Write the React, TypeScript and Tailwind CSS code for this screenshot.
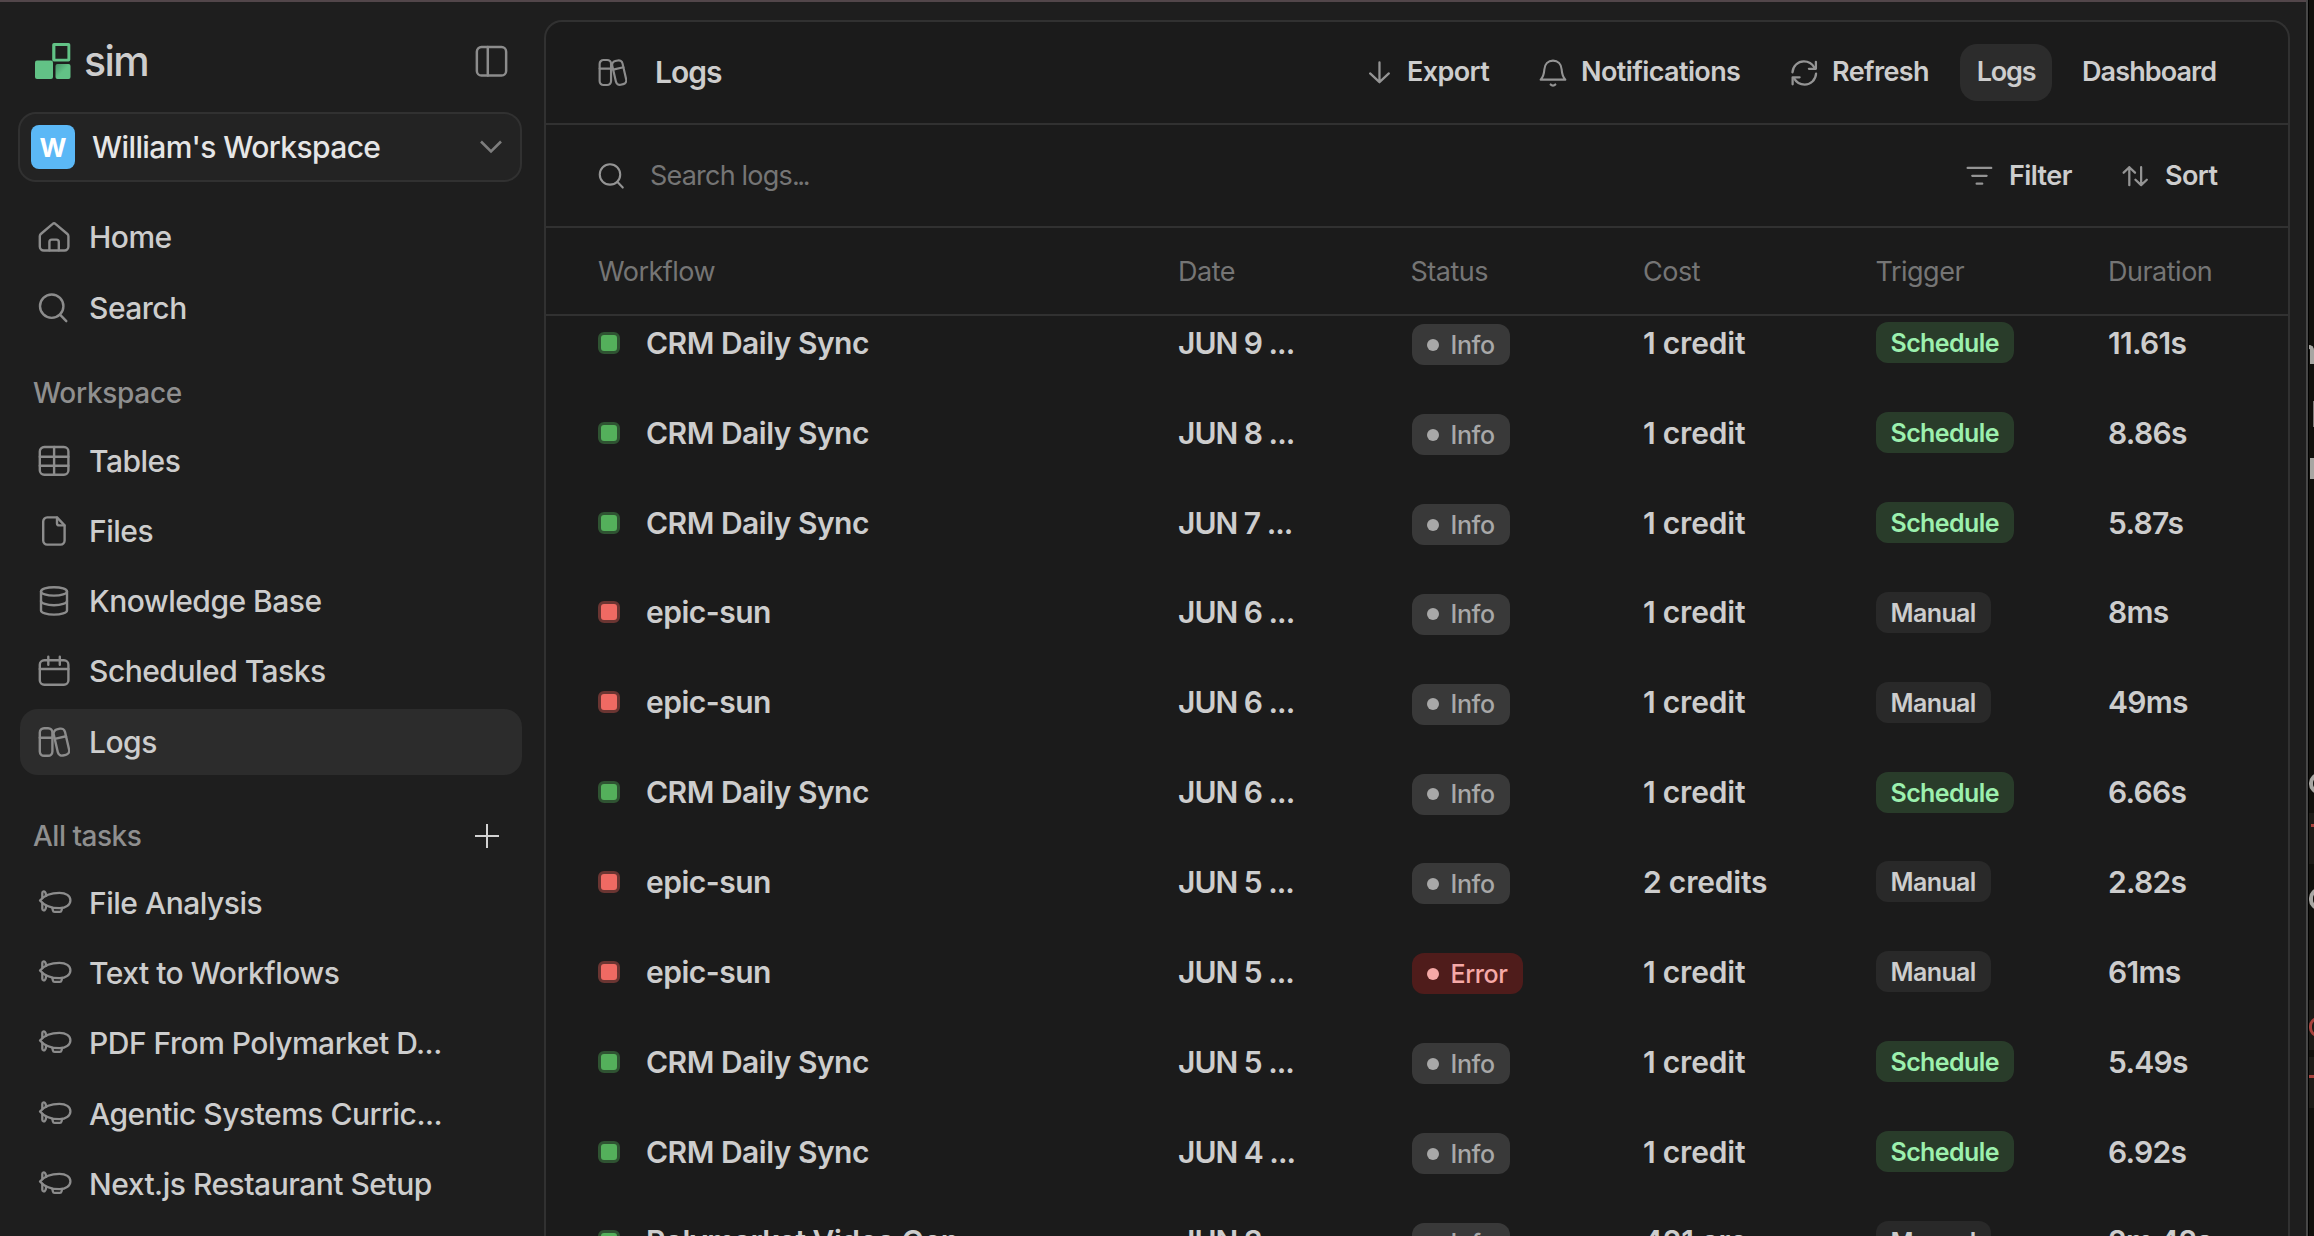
import type { ReactNode } from 'react'
import clsx from 'clsx'

type IconProps = { className?: string }

function Svg({ className = 'size-8', w = 2.4, children }: IconProps & { w?: number; children: ReactNode }) {
  return (
    <svg viewBox="0 0 32 32" className={clsx('shrink-0', className)} fill="none" stroke="currentColor" strokeWidth={w} strokeLinecap="round" strokeLinejoin="round">
      {children}
    </svg>
  )
}

const HomeIcon = () => (
  <Svg>
    <path d="M1.8 15.2v10.3a4 4 0 0 0 4 4h20.6a4 4 0 0 0 4-4V15.2a3 3 0 0 0-1-2.2L17.4 2.9a2 2 0 0 0-2.7 0L2.8 13a3 3 0 0 0-1 2.2Z" />
    <path d="M11.4 29.3V21a2.4 2.4 0 0 1 2.4-2.4h4.6a2.4 2.4 0 0 1 2.4 2.4v8.3" />
  </Svg>
)

const SearchIcon = ({ className }: IconProps) => (
  <Svg className={className}>
    <circle cx="13.7" cy="14.2" r="11.7" />
    <path d="m22 22.6 6.3 6.6" />
  </Svg>
)

const TableIcon = () => (
  <Svg>
    <rect x="1.8" y="2" width="28.6" height="27.8" rx="4.5" />
    <path d="M1.8 11.7h28.6M1.8 20.7h28.6M16.1 2v27.8" />
  </Svg>
)

const FileIcon = () => (
  <Svg>
    <path d="M19 2.4H9.2a4 4 0 0 0-4 4v19.2a4 4 0 0 0 4 4h13.4a4 4 0 0 0 4-4V10.4L19 2.4Z" />
    <path d="M19 2.6v5.6a2.2 2.2 0 0 0 2.2 2.2h5.2" />
  </Svg>
)

const DatabaseIcon = () => (
  <Svg>
    <ellipse cx="16" cy="6.4" rx="13" ry="4.2" />
    <path d="M3 6.4v19c0 2.3 5.8 4.2 13 4.2s13-1.9 13-4.2v-19" />
    <path d="M3 16c0 2.3 5.8 4.2 13 4.2S29 18.3 29 16" />
  </Svg>
)

const CalendarIcon = () => (
  <Svg>
    <rect x="1.8" y="5.2" width="28.6" height="24.6" rx="4.5" />
    <path d="M1.8 14h28.6M10.3 1.8v8M21.8 1.8v8" />
  </Svg>
)

const LibraryIcon = ({ className }: IconProps) => (
  <Svg className={className}>
    <rect x="1.8" y="2.2" width="12.6" height="27.6" rx="4.3" />
    <path d="M1.8 11.7h12.6" />
    <g transform="rotate(-13 23.4 16)">
      <rect x="17.6" y="2.7" width="11.6" height="26.8" rx="4.3" />
      <path d="M17.6 11.4h11.6" />
    </g>
  </Svg>
)

const BlimpIcon = () => (
  <svg viewBox="0 0 34 32" className="h-8 w-[34px] shrink-0" fill="none" stroke="currentColor" strokeWidth="2.3" strokeLinecap="round" strokeLinejoin="round">
    <path d="M2 13.4C6.500 8 14.500 5.800 21.500 5.800c6.500 0 10.900 3 10.900 7.400s-4.400 8-10.900 8C14.500 21.200 6.500 18.800 2 13.400Z" />
    <path d="M4.300 11V6c0-1.500 1.600-2.100 2.600-1.200 1 .9 1.100 2.200 1.200 4M4.300 16v5.800c0 1.500 1.600 2 2.600 1.200.9-.8 1.100-1.700 1.200-3.600" />
    <path d="m14.300 20.800.6 2.600c.2 1 .8 1.500 1.700 1.500h5.200c.9 0 1.500-.5 1.700-1.400l.7-2.700" />
  </svg>
)

const PanelIcon = () => (
  <Svg className="size-[33px]">
    <rect x="1.8" y="2" width="28.4" height="27.6" rx="4.5" />
    <path d="M12.4 2v27.6" />
  </Svg>
)

const ExportIcon = () => (
  <Svg className="size-7" w={2.6}>
    <path d="M15.4 4v22M4.700 16.500l10.700 10 10.700-10" />
  </Svg>
)

const BellIcon = () => (
  <Svg className="h-8 w-7">
    <path d="M1.900 23.600c2.900-3.200 3.900-6.600 4.200-11.600C6.500 5.700 10.500 1.900 16 1.900s9.500 3.800 9.900 10.100c.3 5 1.300 8.400 4.200 11.600Z" />
    <path d="M13.300 29.100c1.400 1.700 4 1.700 5.400 0" />
  </Svg>
)

const RefreshIcon = () => (
  <Svg className="size-7" w={2.6}>
    <path d="M2.800 15.3C3.300 8 9 2.800 15.800 2.800c5.600 0 9.700 2.800 12.300 7.400" />
    <path d="M29.6 3.2v8h-8" />
    <path d="M29.8 16.7C29.3 24 23.6 29.2 16.8 29.2c-5.6 0-9.700-2.800-12.300-7.400" />
    <path d="M3 28.9v-8h8" />
  </Svg>
)

const FilterIcon = () => (
  <Svg className="size-7" w={2.6}>
    <path d="M3 6.8h27M8.3 15.8h16.4M13.3 24.8h6.4" />
  </Svg>
)

const SortIcon = () => (
  <Svg className="size-7" w={2.6}>
    <path d="M9.5 26.5V6M3 12.2 9.500 6l6.500 6.200M23 6v20.500M16.500 20.300l6.500 6.200 6.500-6.200" />
  </Svg>
)

function SimLogo() {
  return (
    <svg viewBox="0 0 36 36" className="size-9 shrink-0">
      <defs>
        <linearGradient id="simShade" x1="0" y1="0" x2="1" y2="1">
          <stop offset="0%" stopColor="#479167" />
          <stop offset="50%" stopColor="#62c286" />
        </linearGradient>
      </defs>
      <rect x="0" y="17.5" width="18" height="18.5" rx="2" fill="#62c286" />
      <path fillRule="evenodd" fill="#62c286" d="M19 0h14.5A1.8 1.8 0 0 1 35.3 1.8v15A1.8 1.8 0 0 1 33.5 18.600H19A1.800 1.800 0 0 1 17.200 16.800v-15A1.800 1.800 0 0 1 19 0Zm1.400 3v12.800h12V3Z" />
      <rect x="20.5" y="21" width="15" height="15" rx="2" fill="url(#simShade)" />
    </svg>
  )
}

function NavItem({ icon, label, active }: { icon: ReactNode; label: string; active?: boolean }) {
  return (
    <div className={clsx('flex h-[66px] items-center rounded-[18px] pl-[18px] text-[#8c8c8c]', active && 'bg-[#2c2c2c]')}>
      <div className="w-[51px]">{icon}</div>
      <span className="text-[30px] leading-[36px] font-medium tracking-[-0.5px] whitespace-nowrap text-[#cdcdcd]">{label}</span>
    </div>
  )
}

const TASKS = ['File Analysis', 'Text to Workflows', 'PDF From Polymarket D...', 'Agentic Systems Curric...', 'Next.js Restaurant Setup']

function Sidebar() {
  return (
    <aside className="flex w-[544px] shrink-0 flex-col pr-[22px] pl-5">
      <div className="mt-[34px] flex h-[50px] items-center justify-between pr-[14px] pl-[15px]">
        <div className="flex items-center">
          <SimLogo />
          <span className="ml-[13px] text-[41px] leading-[44px] font-medium tracking-[-1.6px] text-[#cdcdcd]">sim</span>
        </div>
        <span className="text-[#8c8c8c]"><PanelIcon /></span>
      </div>
      <div className="mt-[26px] -ml-[2px] flex h-[70px] items-center rounded-[18px] border-2 border-[#313131] bg-[#232323] pl-[11px]">
        <div className="flex size-11 items-center justify-center rounded-[8px] bg-[#5bb8f6] text-[26px] font-bold text-white">W</div>
        <span className="ml-[17px] flex-1 text-[30px] leading-[36px] font-medium tracking-[-0.6px] text-[#e6e6e6]">William's Workspace</span>
        <svg viewBox="0 0 22 14" className="mr-[18px] h-[14px] w-[22px]" fill="none" stroke="#7d7d7d" strokeWidth="2.6">
          <path d="M1 1.5 11 11.5 21 1.5" />
        </svg>
      </div>
      <nav className="mt-[22px] flex flex-col gap-[4.5px]">
        <NavItem icon={<HomeIcon />} label="Home" />
        <NavItem icon={<SearchIcon />} label="Search" />
      </nav>
      <h2 className="mt-[34px] pl-[13px] text-[28px] leading-[36px] font-medium tracking-[-0.3px] text-[#8f8f8f]">Workspace</h2>
      <nav className="mt-[17px] flex flex-col gap-[4.3px]">
        <NavItem icon={<TableIcon />} label="Tables" />
        <NavItem icon={<FileIcon />} label="Files" />
        <NavItem icon={<DatabaseIcon />} label="Knowledge Base" />
        <NavItem icon={<CalendarIcon />} label="Scheduled Tasks" />
        <NavItem icon={<LibraryIcon className="size-8" />} label="Logs" active />
      </nav>
      <div className="mt-[43px] flex h-[36px] items-center justify-between pr-[23px] pl-[13px]">
        <h2 className="text-[28px] leading-[36px] font-medium tracking-[-0.5px] text-[#8f8f8f]">All tasks</h2>
        <svg viewBox="0 0 24 24" className="size-6" stroke="#d2d2d2" strokeWidth="2">
          <path d="M0 12h24M12 0v24" />
        </svg>
      </div>
      <nav className="mt-[16px] flex flex-col gap-[4.3px]">
        {TASKS.map(t => <NavItem key={t} icon={<BlimpIcon />} label={t} />)}
      </nav>
    </aside>
  )
}

type Row = { ok: boolean; name: string; date: string; error?: boolean; cost: string; trigger: 'Schedule' | 'Manual'; duration: string }

const crm = (date: string, duration: string): Row => ({ ok: true, name: 'CRM Daily Sync', date, cost: '1 credit', trigger: 'Schedule', duration })
const epic = (date: string, duration: string, cost = '1 credit', error = false): Row => ({ ok: false, name: 'epic-sun', date, error, cost, trigger: 'Manual', duration })

const ROWS: Row[] = [
  crm('JUN 9 ...', '11.61s'),
  crm('JUN 8 ...', '8.86s'),
  crm('JUN 7 ...', '5.87s'),
  epic('JUN 6 ...', '8ms'),
  epic('JUN 6 ...', '49ms'),
  crm('JUN 6 ...', '6.66s'),
  epic('JUN 5 ...', '2.82s', '2 credits'),
  epic('JUN 5 ...', '61ms', '1 credit', true),
  crm('JUN 5 ...', '5.49s'),
  crm('JUN 4 ...', '6.92s'),
  { ok: true, name: 'Polymarket Video Gen...', date: 'JUN 3 ...', cost: '421 cre...', trigger: 'Manual', duration: '2m 42s' },
]

const COLS = 'grid grid-cols-[580px_232.5px_232.5px_232.5px_232.5px_180px] pl-[52px]'

function LogRow({ row }: { row: Row }) {
  return (
    <div className={clsx(COLS, 'h-[89.85px] shrink-0 items-center text-[30px] leading-[36px] font-[580] whitespace-nowrap text-[#cdcdcd]')}>
      <div className="flex items-center gap-[26px]">
        <span className={clsx('size-[22px] rounded-[6px] border-[3px]', row.ok ? 'border-[#2f5332] bg-[#54b05b]' : 'border-[#6a3532] bg-[#ef6a63]')} />
        <span className="tracking-[-0.5px]">{row.name}</span>
      </div>
      <span className="tracking-[-1px]">{row.date}</span>
      <span
        className={clsx(
          'mt-[4px] ml-px flex h-[41px] items-center justify-self-start rounded-[12px] px-[15px] text-[25px] font-medium tracking-[-0.4px]',
          row.error ? 'bg-[#4f1c1b] text-[#f5a9a7]' : 'bg-[#393939] text-[#a8a8a8]',
        )}
      >
        <i className="mr-3 size-3 rounded-full bg-current" />
        {row.error ? 'Error' : 'Info'}
      </span>
      <span className="tracking-[-0.2px]">{row.cost}</span>
      <span
        className={clsx(
          'flex h-[41px] items-center justify-self-start rounded-[12px] px-[15px] pt-px text-[25px] tracking-[-0.6px]',
          row.trigger === 'Schedule' ? 'bg-[#293c2a] text-[#9cf0ae]' : 'bg-[#292929] text-[#cdcdcd]',
        )}
      >
        {row.trigger}
      </span>
      <span className="tracking-[-0.7px]">{row.duration}</span>
    </div>
  )
}

function LogsPanel() {
  return (
    <main className="mt-[18px] flex w-[1746px] shrink-0 flex-col overflow-hidden rounded-t-[18px] border-2 border-b-0 border-[#313131] bg-[#1b1b1b]">
      <header className="flex h-[103px] shrink-0 items-center justify-between border-b-2 border-[#313131] pl-[52px] text-[27px] font-[580] tracking-[-0.6px] text-[#cdcdcd]">
        <div className="flex items-center">
          <span className="text-[#8c8c8c]"><LibraryIcon className="size-[29px]" /></span>
          <h1 className="ml-7 text-[30px] font-semibold tracking-[-1px]">Logs</h1>
        </div>
        <div className="flex w-[922px] items-center">
          <button className="flex w-[173px] items-center gap-[13px]"><span className="text-[#949494]"><ExportIcon /></span>Export</button>
          <button className="flex w-[251px] items-center gap-[14px]"><span className="text-[#949494]"><BellIcon /></span>Notifications</button>
          <button className="flex w-[170px] items-center gap-[14px]"><span className="text-[#949494]"><RefreshIcon /></span>Refresh</button>
          <button className="h-[57px] w-[92px] rounded-[17px] bg-[#2c2c2c] tracking-[-1.2px]">Logs</button>
          <button className="ml-[30px] tracking-[-0.9px]">Dashboard</button>
        </div>
      </header>
      <div className="flex h-[103px] shrink-0 items-center justify-between border-b-2 border-[#313131] pl-[52px]">
        <div className="flex items-center">
          <span className="text-[#949494]"><SearchIcon className="size-7" /></span>
          <span className="ml-6 pt-[2px] text-[27px] tracking-[-0.8px] text-[#757575]">Search logs<span className="tracking-[-2.4px]">...</span></span>
        </div>
        <div className="flex w-[323px] items-center text-[27px] font-[580] tracking-[-0.6px] text-[#cdcdcd]">
          <button className="flex w-[156px] items-center gap-4"><span className="text-[#949494]"><FilterIcon /></span><span className="pt-px">Filter</span></button>
          <button className="flex items-center gap-4"><span className="text-[#949494]"><SortIcon /></span><span className="pt-px">Sort</span></button>
        </div>
      </div>
      <div className={clsx(COLS, 'h-[88px] shrink-0 items-center border-b-2 border-[#313131] pt-[3px] text-[27px] tracking-[-0.5px] text-[#757575]')}>
        <span>Workflow</span>
        <span>Date</span>
        <span>Status</span>
        <span>Cost</span>
        <span>Trigger</span>
        <span>Duration</span>
      </div>
      <div className="flex flex-1 flex-col overflow-hidden">
        <div className="-mt-[18px] flex flex-col">
          {ROWS.map((row, i) => <LogRow key={i} row={row} />)}
        </div>
      </div>
    </main>
  )
}

// Sliver of the window sitting behind the app on the right
function BackWindow() {
  return (
    <div className="flex w-[5px] shrink-0 flex-col overflow-hidden bg-[#11100c]">
      <div className="mt-[345px] h-[19px] w-[5px] rounded-tr-[5px] border-t-4 border-r-4 border-[#a8a6a2]" />
      <div className="mt-[37px] ml-[4px] h-[26px] bg-[#7d7b78]" />
      <div className="mt-[31px] ml-px h-[21px] bg-[#a8a6a2]" />
      <div className="mt-[294px] h-[21px] w-[20px] shrink-0 rounded-full border-4 border-[#a8a6a2]" />
      <div className="mt-[19px] h-[51px] bg-[#1d1b17] pt-[11px] pl-[2px]"><div className="h-[3px] bg-[#a8423c]" /></div>
      <div className="mt-[24px] h-[22px] w-[20px] shrink-0 rounded-full border-4 border-[#a8a6a2]" />
      <div className="mt-[90px] h-[50px] shrink-0 bg-[#1d1b17] pt-[17px]"><div className="h-[20px] w-[18px] rounded-full border-3 border-[#a8423c]" /></div>
      <div className="mt-[7px] h-[51px] shrink-0 bg-[#1d1b17] pt-[18px]"><div className="h-[3px] bg-[#a8423c]" /></div>
    </div>
  )
}

export default function App() {
  return (
    <div className="flex h-[1236px] w-[2314px] overflow-hidden bg-[#11100c] font-['Inter',sans-serif]">
      <div className="flex w-[2308px] shrink-0 flex-col border-r-2 border-[#474747] bg-[#1e1e1e]">
        <div className="h-[2px] shrink-0 bg-[#52464a]" />
        <div className="flex min-h-0 flex-1">
          <Sidebar />
          <LogsPanel />
        </div>
      </div>
      <div className="w-px shrink-0 bg-black" />
      <BackWindow />
    </div>
  )
}
